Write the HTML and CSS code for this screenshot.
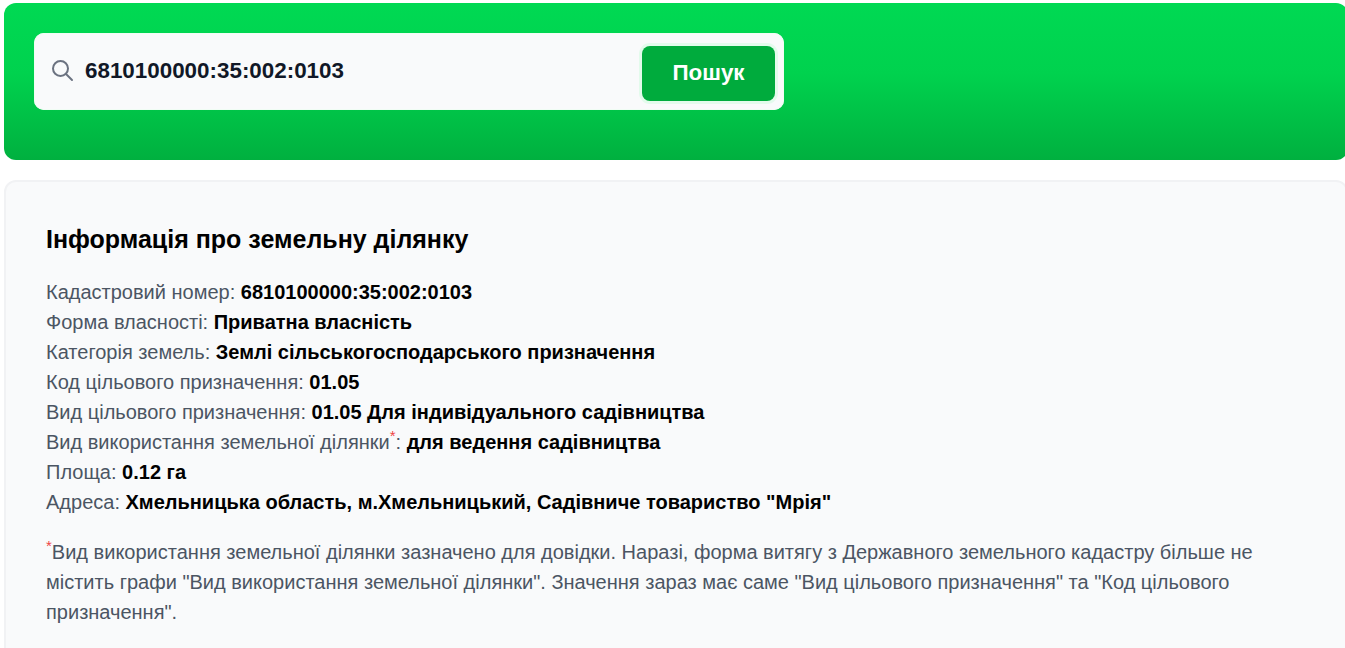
FILE: index.html
```html
<!DOCTYPE html>
<html lang="uk">
<head>
    <meta charset="utf-8" />
    <meta name="viewport" content="width=device-width, initial-scale=1">
    <title>Інформація про земельну ділянку</title>
    <link rel="stylesheet" href="styles.css">
</head>
<body>
    <div class="hero">
        <form class="search" action="#" method="get">
            <svg class="search-icon" width="24" height="24" viewBox="0 0 24 24" fill="none" stroke="#6b7280" stroke-width="2" stroke-linecap="round">
                <circle cx="10.5" cy="10.5" r="7.5"></circle>
                <path d="M16 16l6 6"></path>
            </svg>
            <input class="search-input" type="text" value="6810100000:35:002:0103" />
            <button class="search-btn" type="submit">Пошук</button>
        </form>
    </div>
    <div class="card">
        <h2>Інформація про земельну ділянку</h2>
        <ul class="info">
            <li>Кадастровий номер: <b>6810100000:35:002:0103</b></li>
            <li>Форма власності: <b>Приватна власність</b></li>
            <li>Категорія земель: <b>Землі сільськогосподарського призначення</b></li>
            <li>Код цільового призначення: <b>01.05</b></li>
            <li>Вид цільового призначення: <b>01.05 Для індивідуального садівництва</b></li>
            <li>Вид використання земельної ділянки<sup class="mark">*</sup>: <b>для ведення садівництва</b></li>
            <li>Площа: <b>0.12 га</b></li>
            <li>Адреса: <b>Хмельницька область, м.Хмельницький, Садівниче товариство "Мрія"</b></li>
        </ul>
        <p class="note"><sup class="mark">*</sup>Вид використання земельної ділянки зазначено для довідки. Наразі, форма витягу з Державного земельного кадастру більше не містить графи "Вид використання земельної ділянки". Значення зараз має саме "Вид цільового призначення" та "Код цільового призначення".</p>
    </div>
</body>
</html>
```

FILE: styles.css
```css
*, *:before, *:after{
    box-sizing:border-box;
}
html{
    font-family:"Liberation Sans", Arial, sans-serif;
    background:#fff;
}
body{
    margin:0;
    padding:3px 0 0 4px;
    overflow-x:hidden;
}
.hero{
    height:157px;
    margin-right:-3px;
    padding:30px;
    background:linear-gradient(180deg, #00d953 0%, #00d24e 45%, #00b03f 100%);
    border-radius:12px;
}
.search{
    display:flex;
    align-items:center;
    width:750px;
    height:77px;
    padding:0 9px 0 16px;
    background:#f9fafb;
    border-radius:10px;
    box-shadow:inset 0 0 0 1px #f0fdf4;
}
.search-icon{
    flex:none;
    margin-top:-3px;
}
.search-input{
    flex:1;
    min-width:0;
    margin:-1px 0 0 11px;
    padding:0;
    border:none;
    outline:none;
    background:transparent;
    font-family:inherit;
    font-size:22.4px;
    font-weight:bold;
    color:#111827;
}
.search-btn{
    flex:none;
    width:133px;
    height:55px;
    margin:3px 0 0 8px;
    border:none;
    border-radius:8px;
    background:#00ab3d;
    box-shadow:0 0 0 3px #e3fbec;
    color:#fff;
    font-family:inherit;
    font-size:22.4px;
    font-weight:bold;
}
.card{
    margin:20px -3px 0 0;
    padding:41px 40px 40px 40px;
    background:#f9fafb;
    border:2px solid #f1f2f4;
    border-radius:12px;
    min-height:480px;
}
h2{
    margin:0 0 22px 0;
    font-size:25px;
    line-height:32px;
    color:#000;
}
.info{
    margin:0;
    padding:0;
    list-style:none;
    font-size:20px;
    line-height:30px;
    color:#4b5563;
}
.info b{
    color:#000;
}
.mark{
    color:#ef4444;
    font-size:15px;
    line-height:0;
}
.note{
    margin:20px 3px 0 0;
    font-size:20px;
    line-height:30px;
    color:#4b5563;
}
```
